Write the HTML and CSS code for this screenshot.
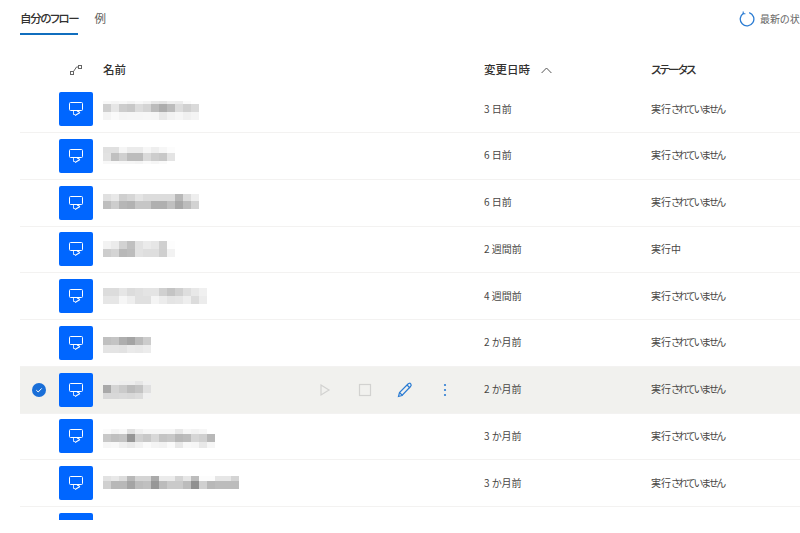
FILE: index.html
```html
<!DOCTYPE html>
<html lang="ja">
<head>
	<meta charset="UTF-8">
	<title>自分のフロー</title>
	<link rel="stylesheet" href="styles.css">
</head>
<body>
	<div class="page">
		<div class="top">
			<div class="tabs">
				<div class="tab active">自分のフロー</div>
				<div class="tab">例</div>
			</div>
			<div class="refresh">
				<svg width="16" height="16" viewBox="0 0 16 16" fill="none" stroke="#2b7cd3" stroke-width="1.3">
					<path d="M4.6 2.2A6.8 6.8 0 1 0 10.2 1.6"/>
					<path d="M4.2 .6v2.2h2.2" stroke-width="1.1"/>
				</svg>
				<span>最新の状態に更新</span>
			</div>
		</div>
		<div class="head">
			<div class="h_icon">
				<svg width="14" height="12" viewBox="0 0 14 12" fill="none" stroke="#666" stroke-width="1">
					<rect x="1.5" y="7.5" width="3" height="3"/>
					<rect x="9.5" y="1.5" width="3" height="3"/>
					<path d="M4.5 7.5l3-4.5h2"/>
				</svg>
			</div>
			<div class="h_name">名前</div>
			<div class="h_date">変更日時
				<svg width="11" height="7" viewBox="0 0 11 7" fill="none" stroke="#555" stroke-width="1"><path d="M.6 6L5.5 1l4.9 5"/></svg>
			</div>
			<div class="h_status">ステータス</div>
		</div>
		<div class="list" id="list"></div>
	</div>
	<script src="script.js"></script>
</body>
</html>
```

FILE: styles.css
```css
*{padding:0;margin:0;box-sizing:border-box;}
html,body{
	height:100%;
	overflow:hidden;
	background:#fff;
}
body{
	font-family:"Noto Sans CJK JP","Liberation Sans",sans-serif;
	font-feature-settings:"palt";
	color:#323130;
}
.page{
	width:900px;
}
.top{
	display:flex;
	height:35px;
}
.tabs{
	flex:0 0 739px;
	display:flex;
	padding-left:20px;
	gap:16px;
}
.tab{
	font-size:11.5px;
	line-height:36px;
	height:35px;
	color:#605e5c;
}
.tab.active{
	color:#323130;
	font-weight:500;
	letter-spacing:-1.3px;
	border-bottom:2px solid #106ebe;
}
.refresh{
	display:flex;
	align-items:center;
	gap:5px;
	height:37px;
	font-size:10px;
	color:#666;
	white-space:nowrap;
}
.head{
	display:grid;
	grid-template-columns:49px 34px 381px 167px 1fr;
	padding-left:20px;
	height:51.25px;
	align-items:center;
	padding-top:17px;
	font-size:11.5px;
	font-weight:500;
}
.h_icon{
	grid-column:1;
	justify-self:end;
	margin-right:-14px;
	height:12px;
}
.h_name{
	grid-column:3;
}
.h_date svg{
	margin-left:8px;
}
.h_status{
	letter-spacing:-1.8px;
}
.list{
	height:433.75px;
	overflow:hidden;
}
.row{
	display:grid;
	grid-template-columns:39px 34px 10px 381px 167px 1fr;
	margin-left:20px;
	height:46.75px;
	align-items:center;
	border-bottom:1px solid #f3f2f1;
	font-size:10px;
	color:#484644;
}
.row.selected{
	background:#f1f1ee;
}
.check{
	display:flex;
	justify-content:center;
	padding-right:1px;
}
.tile{
	width:34px;
	height:34px;
	background:#0066ff;
	border-radius:2px;
	display:flex;
	align-items:center;
	justify-content:center;
}
.name{
	grid-column:4;
	align-self:stretch;
	display:flex;
	justify-content:space-between;
}
.date,.status{
	padding-bottom:2px;
}
.blur{
	display:flex;
	flex-direction:column;
}
.strip{
	display:flex;
}
.cell{
	width:8px;
}
.actions{
	display:flex;
	align-items:center;
	padding-right:19px;
}
.act{
	width:40px;
	display:flex;
	justify-content:center;
}
.kana{
	letter-spacing:-1.7px;
}
```

FILE: script.js
```js
var late = '実行<span class="kana">されていません</span>';
var icon = '<svg width="16" height="16" viewBox="0 0 16 16" fill="none" stroke="#fff" stroke-width="1">' +
	'<rect x="1.5" y="1.5" width="13" height="8" rx="1"/>' +
	'<path d="M5.5 9.5v4h1.500" stroke-width=".8"/><path d="M7 14.500l5-3M9 10l2.500 1" stroke-width="1.100"/></svg>';

var checkIcon = '<svg width="14" height="14" viewBox="0 0 14 14"><circle cx="7" cy="7" r="7" fill="#1a6fd8"/>' +
	'<path d="M4.300 7.200l1.900 1.800 3.500-3.600" fill="none" stroke="#fff" stroke-width="1"/></svg>';

var actions = '<div class="actions">' +
	'<div class="act"><svg width="12" height="14" viewBox="0 0 12 14" fill="none" stroke="#d2d2d0" stroke-width="1.200"><path d="M2 2l8 5-8 5z"/></svg></div>' +
	'<div class="act"><svg width="14" height="14" viewBox="0 0 14 14" fill="none" stroke="#d2d2d0" stroke-width="1.200"><rect x="1.500" y="1.500" width="11" height="11"/></svg></div>' +
	'<div class="act"><svg width="16" height="16" viewBox="0 0 16 16" fill="none" stroke="#2b7cd3" stroke-width="1.200"><path d="M1.500 14.500l1-4L11 2c1-1 2-1 2.700-.2s.8 1.700-.2 2.700L5 13.500z"/><path d="M2.500 10.500l3 3M10 3l3 3"/></svg></div>' +
	'<div class="act"><svg width="4" height="14" viewBox="0 0 4 14" fill="#2b7cd3"><circle cx="2" cy="2" r="1.100"/><circle cx="2" cy="7" r="1.100"/><circle cx="2" cy="12" r="1.100"/></svg></div>' +
	'</div>';

/* 名前はモザイク: top = 行頭からの位置, strips = [高さ, 濃さ...] */
var rows = [
	{date: '3 日前', status: late, top: 15, strips: [
		[3, 'f8f5f8f3f8f3e8e4eeecfaff'],
		[8, 'cfe6cdc8dcd4bcadbcdcd0da'],
		[8, 'f4faf5f6f6f7f6e9f2f6f0f4']]},
	{date: '6 日前', status: late, top: 14, strips: [
		[6, 'e0e0f5ebebf6eef6fc'],
		[8, 'e2c0d0bcbcdacdc8e4'],
		[3, 'f8f8f6f6f4faf6faff']]},
	{date: '6 日前', status: late, top: 14, strips: [
		[7, 'e0e8cfd6e4dcdcdcdcb8dcee'],
		[8, 'becdb6b2c6c6b0b0c0a8bcd2']]},
	{date: '2 週間前', status: '実行中', top: 14, strips: [
		[8, 'f2ebd2c0e2ebe6d0fd'],
		[8, 'cdd4b8bce2dedecff2']]},
	{date: '4 週間前', status: late, top: 15, strips: [
		[8, 'dcdce6dce0e4e4d0c4d0dee8f0'],
		[8, 'e6e6f6eee0e0f4ece4e6eedcec']]},
	{date: '2 か月前', status: late, top: 17, strips: [
		[8, 'c0c4aea4bacc'],
		[8, 'e4e4e2eae8ec']]},
	{date: '2 か月前', status: late, top: 14, selected: true, strips: [
		[4, 'f0f0eeeee6f0'],
		[8, 'a9d4cabcc4e0'],
		[6, 'd8d8dad8dcf0']]},
	{date: '3 か月前', status: late, top: 15, strips: [
		[5, 'fbf4f8e0f0f6f6f6f6e8f6f2f6ff'],
		[8, 'c8c0c496d0c8d8c4c8b8bcd6d0b8'],
		[6, 'f6f8f0eaf2faf4f2fae8f8f6e8f6']]},
	{date: '3 か月前', status: late, top: 16, strips: [
		[5, 'e2e8dcb8d4d4aaebebd4e6bcfcfce6e6d4'],
		[8, 'd0b8b8a4bcc098bccacabc90d0b8bcbcbc']]},
	{date: '', status: '', top: 0, strips: []}
];

function blurHtml(row){
	var html = '<div class="blur" style="margin-top:' + row.top + 'px">';
	for (var i = 0; i < row.strips.length; i++) {
		var s = row.strips[i];
		html += '<div class="strip" style="height:' + s[0] + 'px">';
		for (var j = 0; j < s[1].length; j += 2) {
			var g = s[1].substr(j, 2);
			html += '<div class="cell" style="background:#' + g + g + g + '"></div>';
		}
		html += '</div>';
	}
	return html + '</div>';
}

var out = '';
for (var i = 0; i < rows.length; i++) {
	var r = rows[i];
	out += '<div class="row' + (r.selected ? ' selected' : '') + '">' +
		'<div class="check">' + (r.selected ? checkIcon : '') + '</div>' +
		'<div class="tile">' + icon + '</div>' +
		'<div class="name">' + blurHtml(r) + (r.selected ? actions : '') + '</div>' +
		'<div class="date">' + r.date + '</div>' +
		'<div class="status">' + r.status + '</div>' +
		'</div>';
}
document.getElementById('list').innerHTML = out;
```
